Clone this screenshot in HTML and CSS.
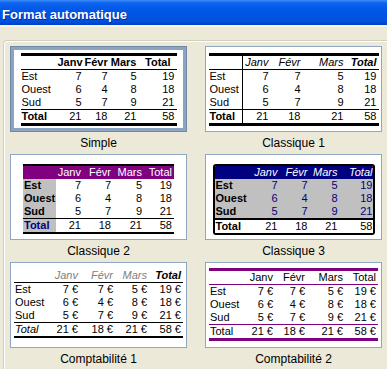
FILE: index.html
```html
<!DOCTYPE html>
<html>
<head>
<meta charset="utf-8">
<link rel="stylesheet" href="styles.css">
</head>
<body>
	<div id="titre">Format automatique</div>
	<div id="filet"></div>
	<div id="contenu">
		<div id="cadre">
			<div class="grille">

				<div class="choix">
					<div class="apercu selection p-simple">
						<table class="simple">
							<colgroup><col><col><col><col><col></colgroup>
							<tr class="entete"><td class="lib"></td><td>Janv</td><td>Févr</td><td>Mars</td><td class="tot">Total</td></tr>
							<tr><td class="lib">Est</td><td>7</td><td>7</td><td>5</td><td>19</td></tr>
							<tr><td class="lib">Ouest</td><td>6</td><td>4</td><td>8</td><td>18</td></tr>
							<tr><td class="lib">Sud</td><td>5</td><td>7</td><td>9</td><td>21</td></tr>
							<tr class="total"><td class="lib">Total</td><td>21</td><td>18</td><td>21</td><td>58</td></tr>
						</table>
					</div>
					<div class="nom">Simple</div>
				</div>

				<div class="choix">
					<div class="apercu p-classique1">
						<table class="classique1">
							<colgroup><col><col><col><col><col></colgroup>
							<tr class="entete"><td class="lib"></td><td>Janv</td><td>Févr</td><td>Mars</td><td class="tot">Total</td></tr>
							<tr><td class="lib">Est</td><td>7</td><td>7</td><td>5</td><td>19</td></tr>
							<tr><td class="lib">Ouest</td><td>6</td><td>4</td><td>8</td><td>18</td></tr>
							<tr><td class="lib">Sud</td><td>5</td><td>7</td><td>9</td><td>21</td></tr>
							<tr class="total"><td class="lib">Total</td><td>21</td><td>18</td><td>21</td><td>58</td></tr>
						</table>
					</div>
					<div class="nom">Classique 1</div>
				</div>

				<div class="choix">
					<div class="apercu p-classique2">
						<table class="classique2">
							<colgroup><col><col><col><col><col></colgroup>
							<tr class="entete"><td class="lib"></td><td>Janv</td><td>Févr</td><td>Mars</td><td>Total</td></tr>
							<tr><td class="lib">Est</td><td>7</td><td>7</td><td>5</td><td>19</td></tr>
							<tr><td class="lib">Ouest</td><td>6</td><td>4</td><td>8</td><td>18</td></tr>
							<tr><td class="lib">Sud</td><td>5</td><td>7</td><td>9</td><td>21</td></tr>
							<tr class="total"><td class="lib">Total</td><td>21</td><td>18</td><td>21</td><td>58</td></tr>
						</table>
					</div>
					<div class="nom">Classique 2</div>
				</div>

				<div class="choix">
					<div class="apercu p-classique3">
						<div class="bord3">
							<table class="classique3">
								<colgroup><col><col><col><col><col></colgroup>
								<tr class="entete"><td class="lib"></td><td>Janv</td><td>Févr</td><td>Mars</td><td>Total</td></tr>
								<tr><td class="lib">Est</td><td>7</td><td>7</td><td>5</td><td>19</td></tr>
								<tr><td class="lib">Ouest</td><td>6</td><td>4</td><td>8</td><td>18</td></tr>
								<tr><td class="lib">Sud</td><td>5</td><td>7</td><td>9</td><td>21</td></tr>
								<tr class="total"><td class="lib">Total</td><td>21</td><td>18</td><td>21</td><td>58</td></tr>
							</table>
						</div>
					</div>
					<div class="nom">Classique 3</div>
				</div>

				<div class="choix">
					<div class="apercu p-compta1">
						<table class="compta1">
							<colgroup><col><col><col><col><col></colgroup>
							<tr class="entete"><td class="lib"></td><td>Janv</td><td>Févr</td><td>Mars</td><td class="tot">Total</td></tr>
							<tr><td class="lib">Est</td><td>7 €</td><td>7 €</td><td>5 €</td><td>19 €</td></tr>
							<tr><td class="lib">Ouest</td><td>6 €</td><td>4 €</td><td>8 €</td><td>18 €</td></tr>
							<tr><td class="lib">Sud</td><td>5 €</td><td>7 €</td><td>9 €</td><td>21 €</td></tr>
							<tr class="total"><td class="lib">Total</td><td>21 €</td><td>18 €</td><td>21 €</td><td>58 €</td></tr>
						</table>
					</div>
					<div class="nom">Comptabilité 1</div>
				</div>

				<div class="choix">
					<div class="apercu p-compta2">
						<table class="compta2">
							<colgroup><col><col><col><col><col></colgroup>
							<tr class="entete"><td class="lib"></td><td>Janv</td><td>Févr</td><td>Mars</td><td>Total</td></tr>
							<tr><td class="lib">Est</td><td>7 €</td><td>7 €</td><td>5 €</td><td>19 €</td></tr>
							<tr><td class="lib">Ouest</td><td>6 €</td><td>4 €</td><td>8 €</td><td>18 €</td></tr>
							<tr><td class="lib">Sud</td><td>5 €</td><td>7 €</td><td>9 €</td><td>21 €</td></tr>
							<tr class="total"><td class="lib">Total</td><td>21 €</td><td>18 €</td><td>21 €</td><td>58 €</td></tr>
						</table>
					</div>
					<div class="nom">Comptabilité 2</div>
				</div>

			</div>
		</div>
	</div>
</body>
</html>
```

FILE: styles.css
```css
body{
	margin: 0;
	height: 369px;
	background-color: #ECE9D8;
	overflow: hidden;
	font-family: "Liberation Sans", Arial, sans-serif;
	color: black;
}

/* barre de titre facon XP */
#titre{
	height: 25px;
	box-sizing: border-box;
	padding: 4px 0 0 2px;
	line-height: 21px;
	font-size: 13px;
	font-weight: bold;
	color: white;
	text-shadow: 1px 1px #0B2A9A;
	background: linear-gradient(#3C8CF8 0px, #0D62EE 3px, #0056E6 45%, #0052DE 85%, #0040C2 100%);
}

#filet{
	height: 2px;
	background-color: #F7F6F0;
}

#contenu{
	padding-top: 13px;
}

/* cadre du groupe, coupe a droite et en bas */
#cadre{
	margin-left: 3px;
	height: 329px;
	box-sizing: border-box;
	overflow: hidden;
	border-top: 1px solid #D0D0BF;
	border-left: 1px solid #D0D0BF;
	border-top-left-radius: 4px;
	box-shadow: inset 1px 1px white;
	padding: 5px 0 0 6px;
}

.grille{
	display: grid;
	grid-template-columns: 177px 177px;
	column-gap: 18px;
}

.choix{
	display: flex;
	flex-direction: column;
}

.apercu{
	height: 86px;
	box-sizing: border-box;
	background-color: white;
	border: 1px solid #8FA6C4;
	display: flex;
	justify-content: center;
	align-items: flex-start;
}

.apercu.selection{
	border: 4px solid #8CA3C1;
	outline: 1px solid #6F88AA;
	outline-offset: -1px;
}

.nom{
	height: 22px;
	line-height: 22px;
	text-align: center;
	font-size: 12px;
}

/* tableaux d'apercu */
table{
	border-collapse: collapse;
	table-layout: fixed;
	font-size: 11px;
}

td{
	height: 13px;
	padding: 0 2px 0 1px;
	line-height: 13px;
	text-align: right;
	white-space: nowrap;
	overflow: hidden;
}

td.lib{
	text-align: left;
}

tr.total td{
	height: 11px;
}

/* Simple */
.p-simple{ padding-top: 3px; }
.simple{ width: 156px; border-top: 3px solid black; border-bottom: 3px solid black; }
.simple col:nth-child(1){ width: 36px; }
.simple col:nth-child(2){ width: 27px; }
.simple col:nth-child(3){ width: 26px; }
.simple col:nth-child(4){ width: 29px; }
.simple col:nth-child(5){ width: 38px; }
.simple tr.entete td{ font-weight: bold; border-bottom: 1px solid black; }
.simple tr.entete td.tot{ padding-right: 6px; }
.simple tr.total td{ border-top: 1px solid black; }
.simple tr.total td.lib{ font-weight: bold; }

/* Classique 1 */
.p-classique1{ padding-top: 6px; }
.classique1{ width: 170px; border-top: 3px solid black; border-bottom: 3px solid black; }
.classique1 col:nth-child(1){ width: 34px; }
.classique1 col:nth-child(2){ width: 28px; }
.classique1 col:nth-child(3){ width: 32px; }
.classique1 col:nth-child(4){ width: 43px; }
.classique1 col:nth-child(5){ width: 33px; }
.classique1 td.lib{ border-right: 1px solid black; }
.classique1 tr.entete td{ font-style: italic; border-bottom: 1px solid black; }
.classique1 tr.entete td.tot{ font-weight: bold; }
.classique1 tr.total td{ border-top: 1px solid black; }
.classique1 tr.total td.lib{ font-weight: bold; }

/* Classique 2 */
.p-classique2{ padding-top: 9px; }
.classique2{ width: 151px; border-top: 2px solid black; border-bottom: 2px solid black; }
.classique2 col:nth-child(1){ width: 33px; }
.classique2 col:nth-child(2){ width: 27px; }
.classique2 col:nth-child(3){ width: 30px; }
.classique2 col:nth-child(4){ width: 31px; }
.classique2 col:nth-child(5){ width: 30px; }
.classique2 tr.entete td{ background-color: #800080; color: white; }
.classique2 td.lib{ background-color: #C0C0C0; font-weight: bold; }
.classique2 tr.entete td.lib{ background-color: #800080; }
.classique2 tr.total td{ border-top: 1px solid black; }
.classique2 tr.total td.lib{ color: #000080; }

/* Classique 3 */
.p-classique3{ padding-top: 9px; }
.bord3{
	border: 2px solid black;
	border-radius: 3px;
	overflow: hidden;
}
.classique3{ width: 158px; }
.classique3 col:nth-child(1){ width: 38px; }
.classique3 col:nth-child(2){ width: 27px; }
.classique3 col:nth-child(3){ width: 30px; }
.classique3 col:nth-child(4){ width: 30px; }
.classique3 col:nth-child(5){ width: 33px; }
.classique3 td{ background-color: #C0C0C0; color: #000080; }
.classique3 td:last-child{ padding-right: 0; }
.classique3 td.lib{ color: black; font-weight: bold; }
.classique3 tr.entete td{ background-color: #000080; color: white; font-style: italic; font-weight: normal; }
.classique3 tr.total td{ background-color: white; color: black; border-top: 2px solid black; }

/* Comptabilite 1 */
.p-compta1{ padding-top: 6px; }
.compta1{ width: 169px; border-bottom: 2px solid black; }
.compta1 col:nth-child(1){ width: 35px; }
.compta1 col:nth-child(2){ width: 31px; }
.compta1 col:nth-child(3){ width: 35px; }
.compta1 col:nth-child(4){ width: 34px; }
.compta1 col:nth-child(5){ width: 34px; }
.compta1 tr.entete td{ font-style: italic; color: #808080; border-bottom: 1px solid black; }
.compta1 tr.entete td.tot{ color: black; font-weight: bold; }
.compta1 tr.total td{ border-top: 1px solid black; }
.compta1 tr.total td.lib{ font-style: italic; }

/* Comptabilite 2 */
.p-compta2{ padding-top: 5px; }
.compta2{ width: 169px; border-top: 3px solid #800080; border-bottom: 3px solid #800080; }
.compta2 col:nth-child(1){ width: 35px; }
.compta2 col:nth-child(2){ width: 31px; }
.compta2 col:nth-child(3){ width: 32px; }
.compta2 col:nth-child(4){ width: 38px; }
.compta2 col:nth-child(5){ width: 33px; }
.compta2 tr.entete td{ border-bottom: 1px solid #800080; }
.compta2 tr.total td{ border-top: 1px solid #800080; }
```
